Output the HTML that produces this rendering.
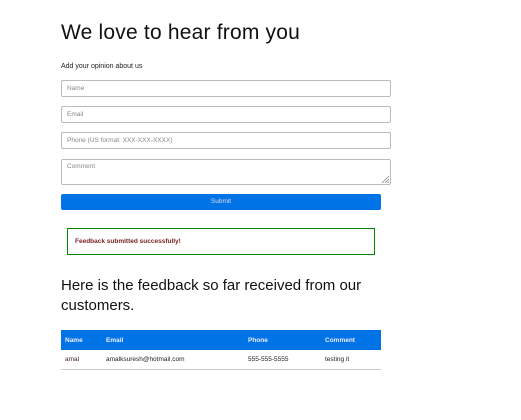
<!DOCTYPE html>
<html><head><style>
*{box-sizing:border-box;margin:0;padding:0}
body{width:521px;height:420px;background:#fff;font-family:"Liberation Sans",sans-serif;color:#111;position:relative;overflow:hidden}
.a{position:absolute}
h1{position:absolute;left:61px;top:21px;font-size:21px;font-weight:normal;letter-spacing:0.2px}
.in{position:absolute;left:61px;width:330px;border:1px solid #bbb;border-radius:2px;font-size:6.5px;color:#888;padding:4px 5px}
</style></head><body>
<h1>We love to hear from you</h1>
<div class="a" style="left:61px;top:63px;font-size:7px;color:#222">Add your opinion about us</div>
<div class="in" style="top:80px;height:17px">Name</div>
<div class="in" style="top:106px;height:17px">Email</div>
<div class="in" style="top:132px;height:17px">Phone (US format: XXX-XXX-XXXX)</div>
<div class="in" style="top:159px;height:26px;padding-top:3px">Comment
<svg class="a" style="right:1px;bottom:1px" width="8" height="8"><path d="M8 1L1 8M8 4L4 8M8 6.5L6.5 8" stroke="#777" stroke-width="0.7"/></svg></div>
<div class="a" style="left:61px;top:194px;width:320px;height:16px;background:#0073e6;border-radius:2px;color:#dde;font-size:6.5px;text-align:center;line-height:16px">Submit</div>
<div class="a" style="left:67px;top:228px;width:308px;height:27px;border:1px solid #080;font-size:6.5px;font-weight:bold;color:#722;padding:9px 0 0 7px">Feedback submitted successfully!</div>
<div class="a" style="left:61px;top:276px;width:320px;font-size:15px;line-height:20px;color:#111">Here is the feedback so far received from our customers.</div>
<div class="a" style="left:61px;top:330px;width:320px;height:20px;background:#0073e6"></div>
<div class="a" style="left:61px;top:350px;width:320px;height:20px;border-bottom:1px solid #ccc"></div>
<div class="a" style="top:337px;left:65px;font-size:6.5px;font-weight:bold;color:#eef">Name</div>
<div class="a" style="top:337px;left:106px;font-size:6.5px;font-weight:bold;color:#eef">Email</div>
<div class="a" style="top:337px;left:248px;font-size:6.5px;font-weight:bold;color:#eef">Phone</div>
<div class="a" style="top:337px;left:325px;font-size:6.5px;font-weight:bold;color:#eef">Comment</div>
<div class="a" style="top:356px;left:65px;font-size:6.5px;color:#422">amal</div>
<div class="a" style="top:356px;left:106px;font-size:6.5px;color:#222">amalksuresh@hotmail.com</div>
<div class="a" style="top:356px;left:248px;font-size:6.5px;color:#222">555-555-5555</div>
<div class="a" style="top:356px;left:325px;font-size:6.5px;color:#222">testing it</div>
</body></html>
